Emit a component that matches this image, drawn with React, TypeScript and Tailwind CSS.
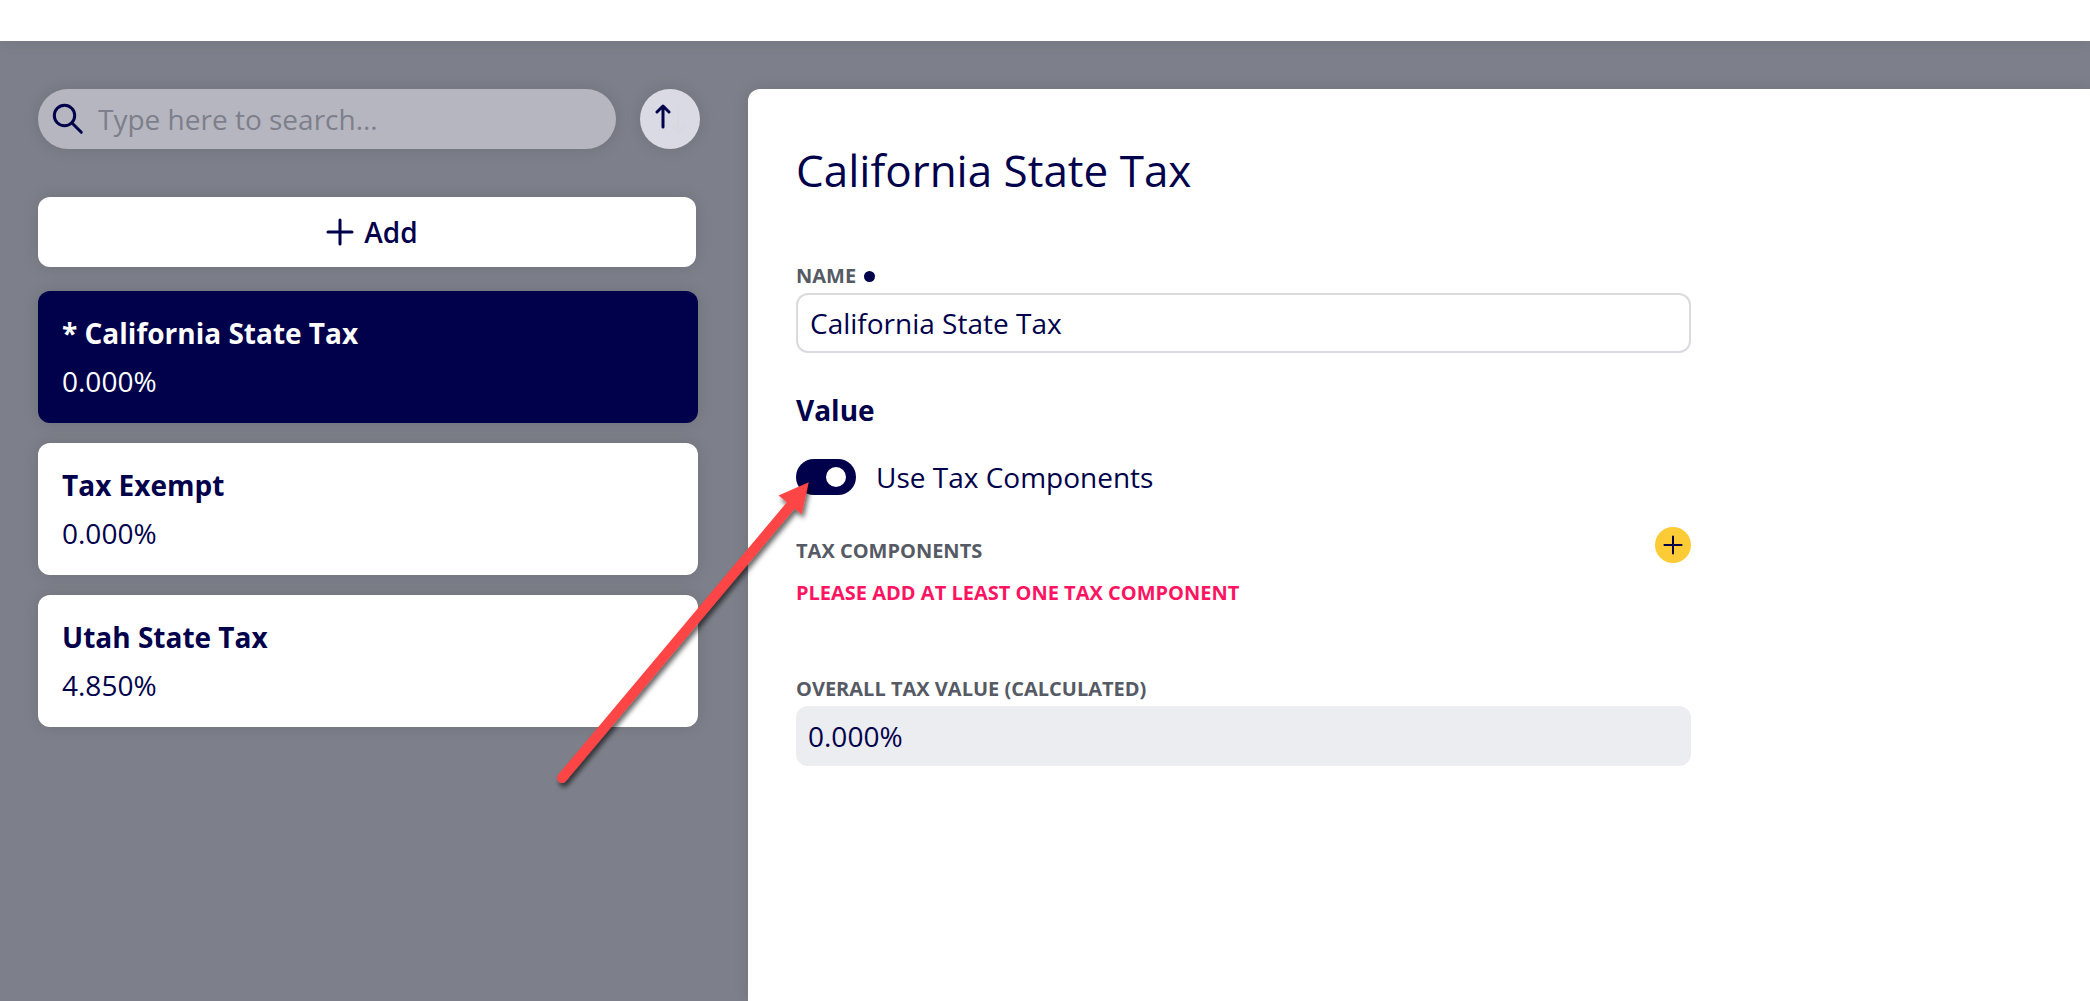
import { useState } from 'react';
import clsx from 'clsx';

type Tax = {
  id: number;
  name: string;
  value: string;
  isDefault?: boolean;
};

const TAXES: Tax[] = [
  { id: 1, name: 'California State Tax', value: '0.000%', isDefault: true },
  { id: 2, name: 'Tax Exempt', value: '0.000%' },
  { id: 3, name: 'Utah State Tax', value: '4.850%' },
];

const labelClass = 'text-[20px] leading-6 font-bold uppercase text-[#555a64]';

function SearchIcon() {
  return (
    <svg className="size-8 shrink-0" viewBox="0 0 32 32" fill="none" stroke="#00004b" strokeWidth="3" strokeLinecap="round" aria-hidden="true">
      <circle cx="12.5" cy="12.5" r="10.2" />
      <path d="M20 20l9.3 9.3" />
    </svg>
  );
}

function PlusIcon({ className, strokeWidth }: { className: string; strokeWidth: number }) {
  return (
    <svg className={className} viewBox="0 0 28 28" fill="none" stroke="currentColor" strokeWidth={strokeWidth} strokeLinecap="round" aria-hidden="true">
      <path d="M14 2v24M2 14h24" />
    </svg>
  );
}

function SortIcon() {
  return (
    <svg className="h-8 w-[30px]" viewBox="0 0 30 32" fill="none" strokeWidth="3" strokeLinecap="round" strokeLinejoin="round" aria-hidden="true">
      <path stroke="#d8d9e0" d="M23 8v21M17 23l6 6 6-6" />
      <path stroke="#00004b" d="M8 24V3M2 9l6-6 6 6" />
    </svg>
  );
}

// callout arrow pointing at the switch
function CalloutArrow() {
  return (
    <svg className="pointer-events-none absolute top-[470px] left-[540px] h-[330px] w-[290px]" viewBox="0 0 290 330" aria-hidden="true">
      <defs>
        <filter id="arrow-shadow" x="-10%" y="-10%" width="120%" height="120%">
          <feDropShadow dx="2" dy="4" stdDeviation="2.5" floodColor="#000" floodOpacity="0.6" />
        </filter>
      </defs>
      <g filter="url(#arrow-shadow)" fill="#ff4444">
        <path d="M22 308L252 34" stroke="#ff4444" strokeWidth="10" strokeLinecap="round" />
        <path d="M268.7 12.3L238.5 25.5L261.7 44.3Z" />
      </g>
    </svg>
  );
}

export default function App() {
  const [selectedId, setSelectedId] = useState(1);
  const [name, setName] = useState('California State Tax');
  const [useComponents, setUseComponents] = useState(true);

  return (
    <div className="relative flex min-h-screen flex-col overflow-hidden bg-[#7d7f8a] font-['Open_Sans','Noto_Sans',sans-serif] text-[28px] text-[#00004b]">
      <header className="h-[41px] bg-white shadow-[0_0_16px_rgba(0,0,0,0.1)]" />

      <div className="flex flex-1 pt-12">
        <aside className="w-[748px] shrink-0 pr-12 pl-[38px]">
          <div className="flex gap-6">
            <label className="flex h-[60px] w-[578px] items-center gap-3.5 rounded-full bg-[#b6b6c0] pl-3.5 shadow-[0_0_16px_rgba(0,0,0,0.12)]">
              <SearchIcon />
              <input
                type="search"
                aria-label="Search taxes"
                placeholder="Type here to search..."
                className="min-w-0 flex-1 bg-transparent outline-none placeholder:text-[#7d7f8a]"
              />
            </label>
            <button
              type="button"
              aria-label="Sort ascending"
              className="flex size-[60px] shrink-0 items-center justify-center rounded-full bg-[#dadae4] shadow-[0_0_16px_rgba(0,0,0,0.12)]"
            >
              <SortIcon />
            </button>
          </div>

          <button
            type="button"
            className="mt-12 flex h-[70px] w-[658px] items-center justify-center gap-2.5 rounded-xl bg-white pl-2.5 font-semibold shadow-[0_0_16px_rgba(0,0,0,0.12)]"
          >
            <PlusIcon className="size-7" strokeWidth={3} />
            Add
          </button>

          <ul className="mt-6 -mr-0.5 flex flex-col gap-5">
            {TAXES.map((tax) => (
              <li key={tax.id}>
                <button
                  type="button"
                  onClick={() => setSelectedId(tax.id)}
                  className={clsx(
                    'block w-[660px] rounded-xl px-6 py-[18px] text-left leading-[48px] shadow-[0_0_16px_rgba(0,0,0,0.12)]',
                    tax.id === selectedId ? 'bg-[#00004b] text-white' : 'bg-white',
                  )}
                >
                  <span className="block font-bold">
                    {tax.isDefault && '* '}
                    {tax.name}
                  </span>
                  <span className="block">{tax.value}</span>
                </button>
              </li>
            ))}
          </ul>
        </aside>

        <main className="min-w-0 flex-1 rounded-tl-xl bg-white pt-12 shadow-[0_0_16px_rgba(0,0,0,0.12)]">
          <form className="ml-12 flex w-2/3 flex-col">
            <h1 className="text-[44px] leading-[66px]">California State Tax</h1>

            <label htmlFor="tax-name" className={clsx(labelClass, 'mt-[61px] flex items-center gap-2')}>
              Name
              <span className="size-[11px] rounded-full bg-[#00004b]" />
            </label>
            <input
              id="tax-name"
              type="text"
              value={name}
              onChange={(e) => setName(e.target.value)}
              className="mt-[5px] h-[60px] rounded-xl border-2 border-[#dadae0] px-3 outline-none"
            />

            <h2 className="mt-9 leading-[42px] font-bold">Value</h2>

            <label className="mt-7 flex h-9 items-center gap-5 self-start">
              <input
                type="checkbox"
                role="switch"
                checked={useComponents}
                onChange={(e) => setUseComponents(e.target.checked)}
                className="flex h-9 w-[60px] appearance-none items-center rounded-full bg-[#7d7f8a] px-2.5 before:size-5 before:rounded-full before:bg-white checked:justify-end checked:bg-[#00004b]"
              />
              Use Tax Components
            </label>

            <div className="mt-8 flex h-9 items-end justify-between">
              <h3 className={labelClass}>Tax Components</h3>
              <button
                type="button"
                aria-label="Add tax component"
                className="flex size-9 items-center justify-center rounded-full bg-[#fdcb35]"
              >
                <PlusIcon className="size-5" strokeWidth={2.8} />
              </button>
            </div>
            <p className="mt-[18px] text-[20px] leading-6 font-bold text-[#ff1462] uppercase">
              Please add at least one tax component
            </p>

            <label htmlFor="overall-value" className={clsx(labelClass, 'mt-[72px]')}>
              Overall Tax Value (Calculated)
            </label>
            <input
              id="overall-value"
              type="text"
              readOnly
              value="0.000%"
              className="mt-[5px] h-[60px] rounded-xl bg-[#ecedf1] px-3 outline-none"
            />
          </form>
        </main>
      </div>

      <CalloutArrow />
    </div>
  );
}
